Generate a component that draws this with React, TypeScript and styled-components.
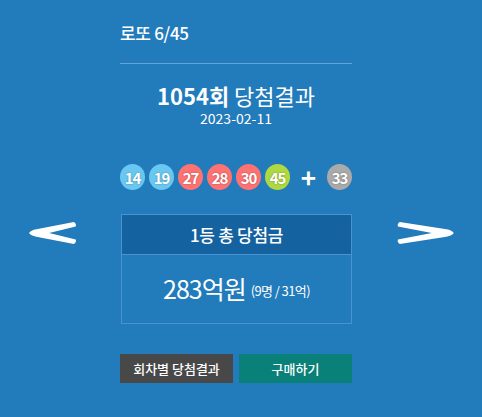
import React from 'react';
import styled, { createGlobalStyle } from 'styled-components';

const GlobalStyle = createGlobalStyle`
  html, body {
    margin: 0;
    padding: 0;
    background: #227bbb;
  }
  body {
    font-family: 'Noto Sans CJK KR', 'Noto Sans', sans-serif;
    color: #fff;
  }
`;

type BallColor = 'blue' | 'red' | 'green' | 'gray';

const ballColors: Record<BallColor, string> = {
  blue: '#69c8f2',
  red: '#ff7272',
  green: '#b0d840',
  gray: '#aaaaaa',
};

const numbers: { n: number; color: BallColor }[] = [
  { n: 14, color: 'blue' },
  { n: 19, color: 'blue' },
  { n: 27, color: 'red' },
  { n: 28, color: 'red' },
  { n: 30, color: 'red' },
  { n: 45, color: 'green' },
];

const App = () => {
  return (
    <Page>
      <GlobalStyle />
      <Column>
        <Title>로또 6/45</Title>
        <Heading>
          <strong>1054회</strong> 당첨결과
        </Heading>
        <DrawDate>2023-02-11</DrawDate>
        <BallRow>
          {numbers.map(({ n, color }) => (
            <Ball key={n} color={color}>
              {n}
            </Ball>
          ))}
          <Plus>+</Plus>
          <Ball color="gray">33</Ball>
        </BallRow>
      </Column>

      <PrizeRow>
        <ArrowCell $side="left">
          <Arrow viewBox="0 0 52 24" aria-label="이전 회차">
            <path
              d="M0 12 Q2 9 8 8 L49 0 Q52 2 51 5 L22 12 L51 19 Q52 22 49 24 L8 16 Q2 15 0 12 Z"
              fill="#fff"
            />
          </Arrow>
        </ArrowCell>
        <PrizeBox>
          <PrizeHead>1등 총 당첨금</PrizeHead>
          <PrizeBody>
            <Amount>283억원</Amount>
            <AmountNote>(9명 / 31억)</AmountNote>
          </PrizeBody>
        </PrizeBox>
        <ArrowCell $side="right">
          <Arrow viewBox="0 0 62 24" aria-label="다음 회차">
            <path
              d="M62 12 Q60 9 54 8 L3 0 Q0 2 1 5 L38 12 L1 19 Q0 22 3 24 L54 16 Q60 15 62 12 Z"
              fill="#fff"
            />
          </Arrow>
        </ArrowCell>
      </PrizeRow>

      <Column>
        <ButtonRow>
          <ActionButton $variant="dark">회차별 당첨결과</ActionButton>
          <ActionButton $variant="teal">구매하기</ActionButton>
        </ButtonRow>
      </Column>
    </Page>
  );
};

export default App;

const Page = styled.div`
  width: 482px;
  min-height: 417px;
  background: #227bbb;
  padding-top: 23px;
  box-sizing: border-box;
`;

const Column = styled.div`
  margin-left: 120px;
  width: 232px;
`;

const Title = styled.div`
  font-size: 17px;
  line-height: 20px;
  font-weight: 500;
  letter-spacing: -0.3px;
  padding-bottom: 20px;
  border-bottom: 1px solid #62a3d8;
`;

const Heading = styled.h1`
  margin: 18px 0 0;
  text-align: center;
  font-size: 22px;
  line-height: 26px;
  font-weight: 400;

  strong {
    font-weight: 700;
  }
`;

const DrawDate = styled.div`
  margin-top: 2px;
  text-align: center;
  font-size: 14px;
  line-height: 16px;
`;

const BallRow = styled.div`
  margin-top: 38px;
  display: flex;
  align-items: center;
  gap: 4px;
`;

const Ball = styled.span<{ color: BallColor }>`
  width: 26px;
  height: 26px;
  border-radius: 50%;
  background: ${({ color }) => ballColors[color]};
  display: flex;
  align-items: center;
  justify-content: center;
  font-size: 15px;
  font-weight: 700;
  letter-spacing: -1px;
  text-shadow: 0 0 2px rgba(0, 0, 0, 0.35);
`;

const Plus = styled.span`
  width: 26px;
  text-align: center;
  font-size: 26px;
  line-height: 26px;
  font-weight: 700;
  margin: 0 2px;
`;

const PrizeRow = styled.div`
  margin-top: 24px;
  display: grid;
  grid-template-columns: 120px 232px 1fr;
`;

const ArrowCell = styled.div<{ $side: 'left' | 'right' }>`
  padding-top: 8px;
  padding-left: ${({ $side }) => ($side === 'left' ? '29px' : '45px')};
`;

const Arrow = styled.svg`
  display: block;
  height: 22px;
  width: auto;
  filter: blur(0.5px);
`;

const PrizeBox = styled.div`
  border: 1px solid #4b93d0;
  margin-left: 1px;
  width: 229px;
`;

const PrizeHead = styled.div`
  height: 39px;
  background: #1562a0;
  border-bottom: 1px solid #4b93d0;
  display: flex;
  align-items: center;
  justify-content: center;
  font-size: 17px;
  font-weight: 500;
  letter-spacing: -0.3px;
`;

const PrizeBody = styled.div`
  height: 68px;
  display: flex;
  align-items: center;
  justify-content: center;
  gap: 5px;
  padding-bottom: 2px;
  box-sizing: border-box;
`;

const Amount = styled.span`
  font-size: 25px;
  letter-spacing: -1px;
`;

const AmountNote = styled.span`
  font-size: 13px;
  letter-spacing: -0.6px;
  margin-top: 4px;
`;

const ButtonRow = styled.div`
  margin-top: 30px;
  display: flex;
  gap: 6px;
`;

const ActionButton = styled.button<{ $variant: 'dark' | 'teal' }>`
  flex: 1;
  height: 29px;
  border: 0;
  padding: 0;
  background: ${({ $variant }) => ($variant === 'dark' ? '#484848' : '#098078')};
  color: #fff;
  font-family: 'Noto Sans CJK KR', 'Noto Sans', sans-serif;
  font-size: 13px;
  font-weight: 500;
  cursor: pointer;
`;
